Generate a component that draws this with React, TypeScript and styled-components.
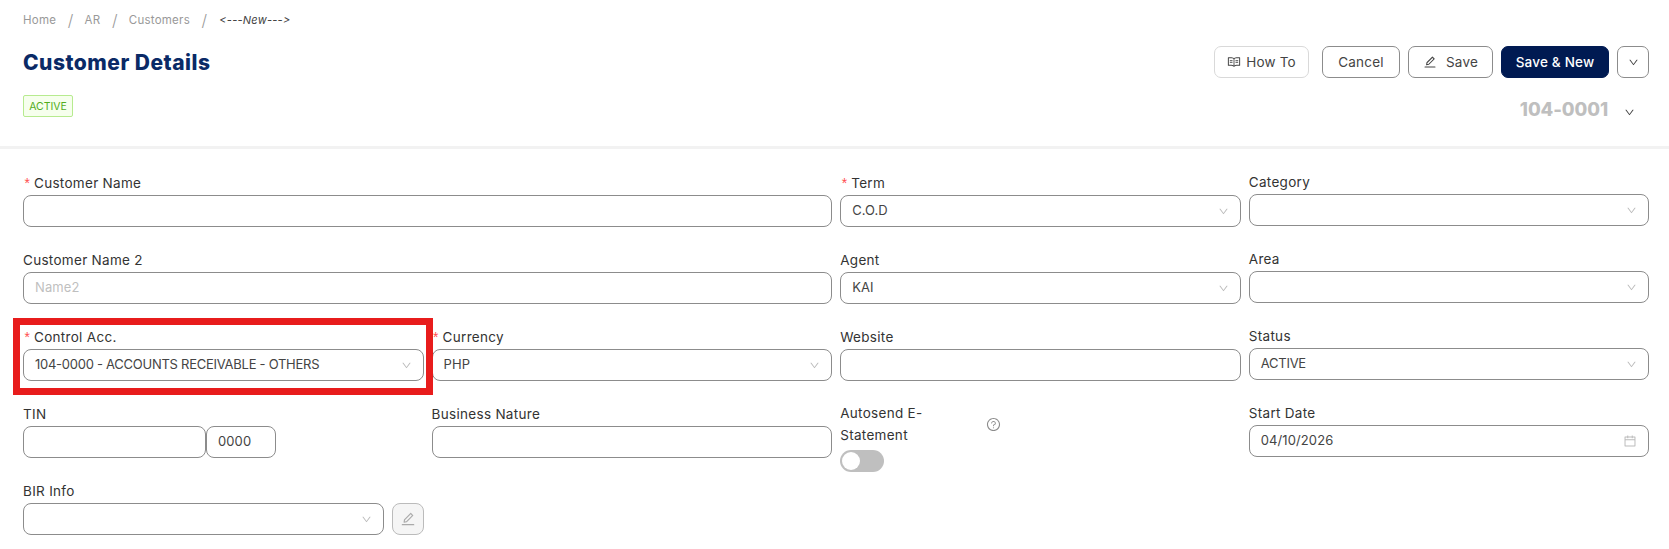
import React from "react";
import styled, { createGlobalStyle } from "styled-components";
import { AiOutlineRead, AiOutlineEdit, AiOutlineDown, AiOutlineCalendar, AiOutlineQuestionCircle } from "react-icons/ai";

const Global = createGlobalStyle`
  html, body { margin: 0; padding: 0; background: #fff; }
  body { font-family: Inter, "Liberation Sans", sans-serif; color: #333; font-size: 13px; }
  * { box-sizing: border-box; }
`;

const Page = styled.div`
  width: 1669px;
  height: 549px;
  overflow: hidden;
  position: relative;
`;
const Header = styled.header`
  height: 149px;
  padding: 0 20px 0 23px;
  border-bottom: 3px solid #f2f2f2;
`;
const Crumbs = styled.nav`
  height: 40px;
  display: flex;
  align-items: center;
  font-size: 11.5px;
  letter-spacing: 0.25px;
  color: #999;
`;
const Sep = styled.span`
  margin: 0 11px 0 11.5px;
  font-size: 16px;
  font-weight: 300;
`;
const Current = styled.span`
  color: #444;
  font-size: 11px;
  font-style: italic;
  margin-left: 1px;
`;
const TitleRow = styled.div`
  margin-top: 6px;
  display: flex;
  align-items: center;
  justify-content: space-between;
`;
const Title = styled.h1`
  margin: 0;
  padding-top: 2px;
  font-size: 21px;
  line-height: 30px;
  font-weight: 800;
  letter-spacing: 0.5px;
  color: #0a2a66;
`;
const Actions = styled.div`
  display: flex;
  align-items: center;
`;
const Btn = styled.button<{ $w: number; $gap: number; $light?: boolean; $primary?: boolean }>`
  width: ${(p) => p.$w}px;
  margin-left: ${(p) => p.$gap}px;
  height: 32px;
  display: flex;
  align-items: center;
  justify-content: center;
  gap: 5px;
  border-radius: 7px;
  font: inherit;
  font-size: 13.5px;
  padding: 0;
  letter-spacing: 0.2px;
  color: ${(p) => (p.$primary ? "#fff" : "#444")};
  background: ${(p) => (p.$primary ? "#001a52" : "#fff")};
  border: 1px solid ${(p) => (p.$primary ? "#001a52" : p.$light ? "#d9d9d9" : "#8c8c8c")};
  font-weight: ${(p) => (p.$primary ? 500 : 400)};
`;
const SubRow = styled.div`
  margin-top: 17px;
  display: flex;
  align-items: flex-start;
  justify-content: space-between;
`;
const Badge = styled.span`
  width: 50px;
  height: 22px;
  display: flex;
  align-items: center;
  justify-content: center;
  font-size: 10.5px;
  color: #52ad1c;
  background: #f6ffed;
  border: 1px solid #b7eb8f;
  border-radius: 2px;
`;
const DocNo = styled.div`
  display: flex;
  align-items: center;
  margin-top: 3px;
  font-size: 18.5px;
  font-weight: 800;
  letter-spacing: -0.1px;
  color: #bfbfbf;
  svg { margin: 7px 14px 0 16px; color: #444; font-size: 11px; }
`;
const Form = styled.main`
  padding: 22px 0 0 23px;
  display: grid;
  grid-template-columns: repeat(4, 400.6px);
  column-gap: 8px;
  grid-auto-rows: 77px;
  width: 1669px;
`;
const Field = styled.div<{ $span?: number; $up?: number }>`
  grid-column: span ${(p) => p.$span ?? 1};
  padding-top: ${(p) => 1 - (p.$up ?? 0)}px;
  min-width: 0;
`;
const Label = styled.label`
  display: flex;
  align-items: center;
  height: 23px;
  padding-bottom: 2px;
  font-size: 13.5px;
  letter-spacing: 0.3px;
  color: #333;
`;
const Star = styled.span`
  font-family: "Liberation Mono", monospace;
  color: #ff4d4f;
  font-size: 14px;
  width: 11px;
  margin-top: 4px;
`;
const Control = styled.div<{ $w?: number }>`
  height: 32px;
  ${(p) => (p.$w ? `width: ${p.$w}px; flex: none;` : "flex: 1; min-width: 0;")}
  display: flex;
  align-items: center;
  justify-content: space-between;
  padding: 0 11px 2px;
  border: 1px solid #8c8c8c;
  border-radius: 8px;
  background: #fff;
  font-size: 13px;
  letter-spacing: 0.1px;
  color: #444;
  svg { color: #bbb; font-size: 11px; flex: none; margin-top: 2px; }
`;
const Caps = styled.span`
  letter-spacing: -0.26px;
`;
const Placeholder = styled.span`
  color: #bfbfbf;
`;
const Row = styled.div<{ $gap?: number; $w?: number }>`
  display: flex;
  gap: ${(p) => p.$gap ?? 0}px;
  width: ${(p) => (p.$w ? `${p.$w}px` : "auto")};
`;
const EditBtn = styled.button`
  width: 32px;
  height: 32px;
  flex: none;
  padding: 0;
  display: flex;
  align-items: center;
  justify-content: center;
  background: #f5f5f5;
  border: 1px solid #bbb;
  border-radius: 8px;
  color: #aaa;
  font-size: 16px;
`;
const AutoHead = styled.div`
  display: flex;
  align-items: center;
  height: 45px;
  margin-top: -1px;
`;
const AutoLabel = styled.div`
  width: 146px;
  padding-right: 30px;
  font-size: 13.5px;
  letter-spacing: 0.3px;
  line-height: 22px;
`;
const Help = styled.span`
  color: #8c8c8c;
  font-size: 15px;
  display: flex;
  margin-top: 1px;
`;
const Toggle = styled.div`
  width: 44px;
  height: 22px;
  margin-top: 4px;
  border-radius: 11px;
  background: #bfbfbf;
  padding: 2px;
`;
const Knob = styled.div`
  width: 18px;
  height: 18px;
  border-radius: 50%;
  background: #fff;
`;
const Highlight = styled.div`
  position: absolute;
  left: 13px;
  top: 318px;
  width: 420px;
  height: 77px;
  border: 7px solid #e81c1c;
  pointer-events: none;
`;

const Select = ({ value, w }: { value?: React.ReactNode; w?: number }) => (
  <Control $w={w}>
    <span>{value}</span>
    <AiOutlineDown />
  </Control>
);

export default function App() {
  return (
    <Page>
      <Global />
      <Header>
        <Crumbs>
          Home<Sep>/</Sep>AR<Sep>/</Sep>Customers<Sep>/</Sep>
          <Current>{"<---New--->"}</Current>
        </Crumbs>
        <TitleRow>
          <Title>Customer Details</Title>
          <Actions>
            <Btn $w={95} $gap={0} $light><AiOutlineRead size={14} />How To</Btn>
            <Btn $w={78} $gap={13}>Cancel</Btn>
            <Btn $w={85} $gap={8}><AiOutlineEdit size={14} style={{ marginRight: 4 }} />Save</Btn>
            <Btn $w={108} $gap={8} $primary>Save &amp; New</Btn>
            <Btn $w={32} $gap={8}><AiOutlineDown size={11} /></Btn>
          </Actions>
        </TitleRow>
        <SubRow>
          <Badge>ACTIVE</Badge>
          <DocNo>104-0001<AiOutlineDown /></DocNo>
        </SubRow>
      </Header>
      <Form>
        <Field $span={2}>
          <Label><Star>*</Star>Customer Name</Label>
          <Control />
        </Field>
        <Field>
          <Label><Star>*</Star>Term</Label>
          <Select value="C.O.D" />
        </Field>
        <Field $up={1}>
          <Label>Category</Label>
          <Select />
        </Field>

        <Field $span={2}>
          <Label>Customer Name 2</Label>
          <Control><Placeholder>Name2</Placeholder></Control>
        </Field>
        <Field>
          <Label>Agent</Label>
          <Select value="KAI" />
        </Field>
        <Field $up={1}>
          <Label>Area</Label>
          <Select />
        </Field>

        <Field>
          <Label><Star>*</Star>Control Acc.</Label>
          <Select value={<Caps>104-0000 - ACCOUNTS RECEIVABLE - OTHERS</Caps>} />
        </Field>
        <Field>
          <Label><Star>*</Star>Currency</Label>
          <Select value="PHP" />
        </Field>
        <Field>
          <Label>Website</Label>
          <Control />
        </Field>
        <Field $up={2}>
          <Label>Status</Label>
          <Select value={<Caps>ACTIVE</Caps>} />
        </Field>

        <Field>
          <Label>TIN</Label>
          <Row $w={253}>
            <Control />
            <Control $w={70}>0000</Control>
          </Row>
        </Field>
        <Field>
          <Label>Business Nature</Label>
          <Control />
        </Field>
        <Field $up={2}>
          <AutoHead>
            <AutoLabel>Autosend E-Statement</AutoLabel>
            <Help><AiOutlineQuestionCircle /></Help>
          </AutoHead>
          <Toggle><Knob /></Toggle>
        </Field>
        <Field $up={2}>
          <Label>Start Date</Label>
          <Control>
            <span>04/10/2026</span>
            <AiOutlineCalendar style={{ fontSize: 14 }} />
          </Control>
        </Field>

        <Field>
          <Label>BIR Info</Label>
          <Row $gap={8}>
            <Select />
            <EditBtn><AiOutlineEdit /></EditBtn>
          </Row>
        </Field>
      </Form>
      <Highlight />
    </Page>
  );
}
